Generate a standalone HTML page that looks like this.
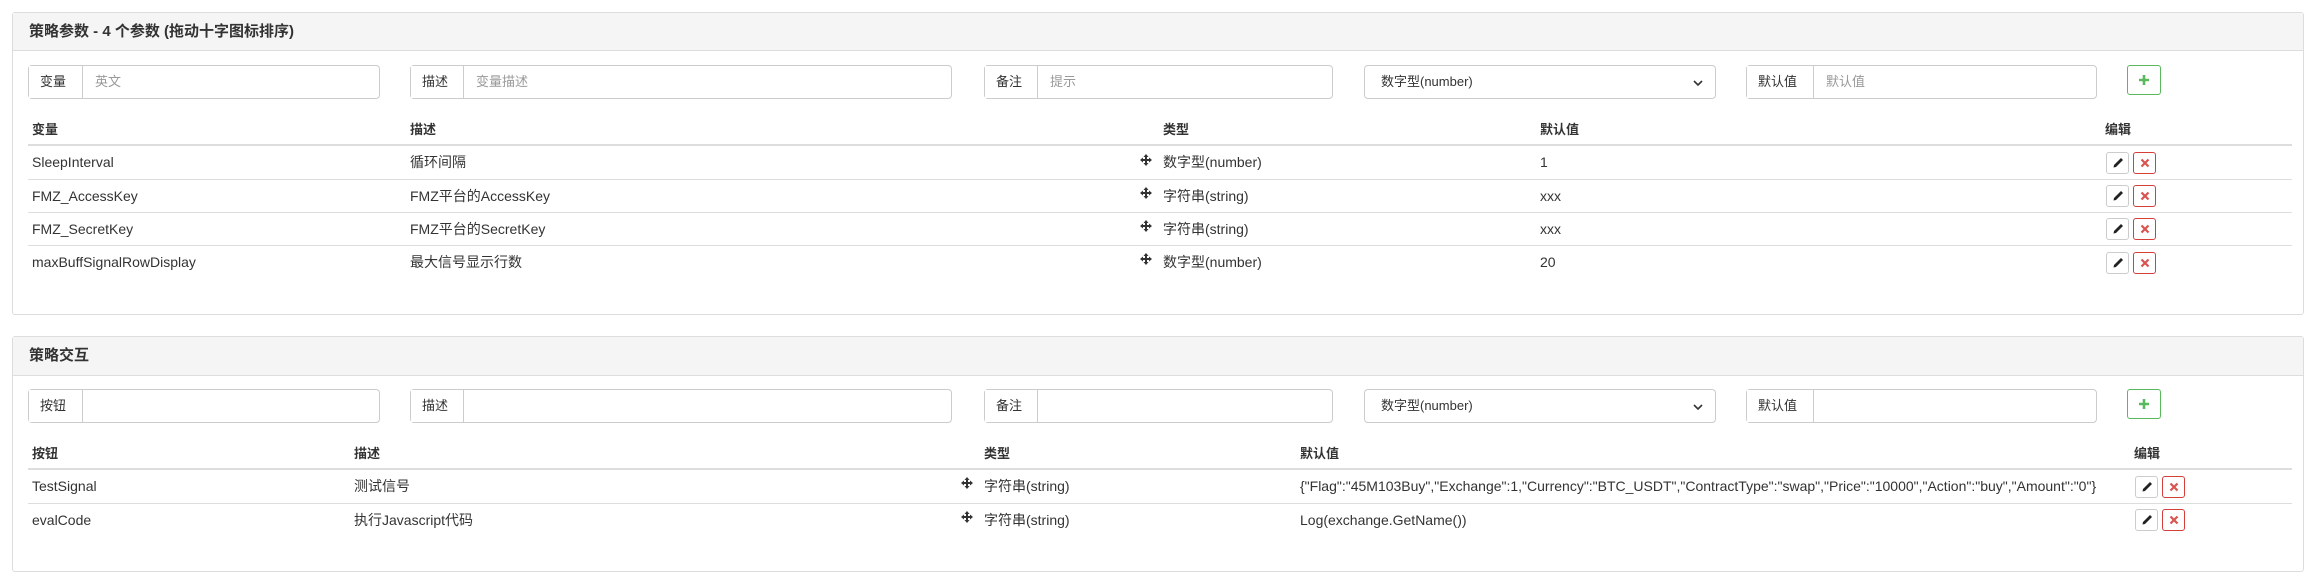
<!DOCTYPE html>
<html><head><meta charset="utf-8"><style>
*{box-sizing:border-box;margin:0;padding:0}
body{width:2313px;height:582px;background:#fff;font-family:"Liberation Sans","Noto Sans CJK SC",sans-serif;font-size:14px;color:#333;position:relative;overflow:hidden}
.a{position:absolute}
.panel{position:absolute;left:12px;width:2292px;border:1px solid #ddd;border-radius:3px;background:#fff}
.ph{position:absolute;left:0;top:0;right:0;background:#f5f5f5;border-bottom:1px solid #ddd;font-weight:bold;font-size:15px;padding-left:16px}
.grp{position:absolute;height:34px;border:1px solid #ccc;border-radius:4px;background:#fff}
.ad{position:absolute;left:0;top:0;bottom:0;border-right:1px solid #ccc;background:#fff;padding-left:11px;line-height:32px;font-size:13px}
.ph2{position:absolute;top:0;line-height:32px;color:#999;font-size:13px}
.sel{position:absolute;height:34px;border:1px solid #ccc;border-radius:4px;line-height:32px;padding-left:16px;font-size:13px}
.sel svg{position:absolute;right:12px;top:13px}
.plus{position:absolute;width:34px;height:30px;border:1px solid #5cb85c;border-radius:3px}
.th{position:absolute;font-weight:bold;font-size:13px;line-height:18px;height:18px}
.line{position:absolute;height:1px;background:#ddd}
.t{position:absolute;font-size:14px;white-space:nowrap;line-height:18px;height:18px}
.be{position:absolute;width:23px;height:22px;border:1px solid #ccc;border-radius:3px;background:#fff}
.bx{position:absolute;width:23px;height:22px;border:1px solid #d43f3a;border-radius:3px;background:#fff}
</style></head><body>
<svg width="0" height="0" style="position:absolute"><defs>
<symbol id="mv" viewBox="0 0 12 12"><path d="M6 0L8.5 3H7V5H9V3.5L12 6L9 8.5V7H7V9H8.5L6 12L3.5 9H5V7H3V8.5L0 6L3 3.5V5H5V3H3.5Z" fill="#333"/></symbol>
<symbol id="pen" viewBox="0 0 12 12"><path d="M9 1L11 3L4 10L1.5 10.5L2 8Z" fill="#222"/></symbol>
<symbol id="xx" viewBox="0 0 12 12"><path d="M2.5 2.5L9.5 9.5M9.5 2.5L2.5 9.5" stroke="#d9534f" stroke-width="2.2"/></symbol>
<symbol id="pl" viewBox="0 0 12 12"><path d="M6 1V11M1 6H11" stroke="#5cb85c" stroke-width="2.6"/></symbol>
</defs></svg>

<div class="panel" style="top:12px;height:303px">
<div class="ph" style="height:38px;line-height:37px">策略参数 - 4 个参数 (拖动十字图标排序)</div>
</div>
<div class="grp" style="left:28px;top:65px;width:352px"><div class="ad" style="width:54px">变量</div><div class="ph2" style="left:66px">英文</div></div>
<div class="grp" style="left:410px;top:65px;width:542px"><div class="ad" style="width:53px">描述</div><div class="ph2" style="left:65px">变量描述</div></div>
<div class="grp" style="left:984px;top:65px;width:349px"><div class="ad" style="width:53px">备注</div><div class="ph2" style="left:65px">提示</div></div>
<div class="sel" style="left:1364px;top:65px;width:352px">数字型(number)<svg width="10" height="8" viewBox="0 0 10 8"><path d="M1 2L5 6L9 2" stroke="#333" stroke-width="1.6" fill="none"/></svg></div>
<div class="grp" style="left:1746px;top:65px;width:351px"><div class="ad" style="width:67px">默认值</div><div class="ph2" style="left:79px">默认值</div></div>
<div class="plus" style="left:2127px;top:65px"><svg class="a" style="left:10px;top:8px" width="12" height="12"><use href="#pl"/></svg></div>

<div class="th" style="left:32px;top:121px">变量</div>
<div class="th" style="left:410px;top:121px">描述</div>
<div class="th" style="left:1163px;top:121px">类型</div>
<div class="th" style="left:1540px;top:121px">默认值</div>
<div class="th" style="left:2105px;top:121px">编辑</div>
<div class="line" style="left:28px;width:2264px;top:144px;height:2px"></div>
<div class="line" style="left:28px;width:2264px;top:179px"></div>
<div class="line" style="left:28px;width:2264px;top:212px"></div>
<div class="line" style="left:28px;width:2264px;top:245px"></div>

<div class="t" style="left:32px;top:153px">SleepInterval</div><div class="t" style="left:410px;top:153px">循环间隔</div><svg class="a" style="left:1140px;top:154px" width="12" height="12"><use href="#mv"/></svg><div class="t" style="left:1163px;top:153px">数字型(number)</div><div class="t" style="left:1540px;top:153px">1</div>
<div class="t" style="left:32px;top:187px">FMZ_AccessKey</div><div class="t" style="left:410px;top:187px">FMZ平台的AccessKey</div><svg class="a" style="left:1140px;top:187px" width="12" height="12"><use href="#mv"/></svg><div class="t" style="left:1163px;top:187px">字符串(string)</div><div class="t" style="left:1540px;top:187px">xxx</div>
<div class="t" style="left:32px;top:220px">FMZ_SecretKey</div><div class="t" style="left:410px;top:220px">FMZ平台的SecretKey</div><svg class="a" style="left:1140px;top:220px" width="12" height="12"><use href="#mv"/></svg><div class="t" style="left:1163px;top:220px">字符串(string)</div><div class="t" style="left:1540px;top:220px">xxx</div>
<div class="t" style="left:32px;top:253px">maxBuffSignalRowDisplay</div><div class="t" style="left:410px;top:253px">最大信号显示行数</div><svg class="a" style="left:1140px;top:253px" width="12" height="12"><use href="#mv"/></svg><div class="t" style="left:1163px;top:253px">数字型(number)</div><div class="t" style="left:1540px;top:253px">20</div>

<div class="be" style="left:2106px;top:152px"><svg class="a" style="left:5px;top:4px" width="12" height="12"><use href="#pen"/></svg></div><div class="bx" style="left:2133px;top:152px"><svg class="a" style="left:5px;top:4px" width="12" height="12"><use href="#xx"/></svg></div>
<div class="be" style="left:2106px;top:185px"><svg class="a" style="left:5px;top:4px" width="12" height="12"><use href="#pen"/></svg></div><div class="bx" style="left:2133px;top:185px"><svg class="a" style="left:5px;top:4px" width="12" height="12"><use href="#xx"/></svg></div>
<div class="be" style="left:2106px;top:218px"><svg class="a" style="left:5px;top:4px" width="12" height="12"><use href="#pen"/></svg></div><div class="bx" style="left:2133px;top:218px"><svg class="a" style="left:5px;top:4px" width="12" height="12"><use href="#xx"/></svg></div>
<div class="be" style="left:2106px;top:252px"><svg class="a" style="left:5px;top:4px" width="12" height="12"><use href="#pen"/></svg></div><div class="bx" style="left:2133px;top:252px"><svg class="a" style="left:5px;top:4px" width="12" height="12"><use href="#xx"/></svg></div>

<div class="panel" style="top:336px;height:236px">
<div class="ph" style="height:39px;line-height:38px">策略交互</div>
</div>
<div class="grp" style="left:28px;top:389px;width:352px"><div class="ad" style="width:54px">按钮</div></div>
<div class="grp" style="left:410px;top:389px;width:542px"><div class="ad" style="width:53px">描述</div></div>
<div class="grp" style="left:984px;top:389px;width:349px"><div class="ad" style="width:53px">备注</div></div>
<div class="sel" style="left:1364px;top:389px;width:352px">数字型(number)<svg width="10" height="8" viewBox="0 0 10 8"><path d="M1 2L5 6L9 2" stroke="#333" stroke-width="1.6" fill="none"/></svg></div>
<div class="grp" style="left:1746px;top:389px;width:351px"><div class="ad" style="width:67px">默认值</div></div>
<div class="plus" style="left:2127px;top:389px"><svg class="a" style="left:10px;top:8px" width="12" height="12"><use href="#pl"/></svg></div>

<div class="th" style="left:32px;top:445px">按钮</div>
<div class="th" style="left:354px;top:445px">描述</div>
<div class="th" style="left:984px;top:445px">类型</div>
<div class="th" style="left:1300px;top:445px">默认值</div>
<div class="th" style="left:2134px;top:445px">编辑</div>
<div class="line" style="left:28px;width:2264px;top:468px;height:2px"></div>
<div class="line" style="left:28px;width:2264px;top:503px"></div>

<div class="t" style="left:32px;top:477px">TestSignal</div><div class="t" style="left:354px;top:477px">测试信号</div><svg class="a" style="left:961px;top:477px" width="12" height="12"><use href="#mv"/></svg><div class="t" style="left:984px;top:477px">字符串(string)</div><div class="t" style="left:1300px;top:477px">{"Flag":"45M103Buy","Exchange":1,"Currency":"BTC_USDT","ContractType":"swap","Price":"10000","Action":"buy","Amount":"0"}</div>
<div class="t" style="left:32px;top:511px">evalCode</div><div class="t" style="left:354px;top:511px">执行Javascript代码</div><svg class="a" style="left:961px;top:511px" width="12" height="12"><use href="#mv"/></svg><div class="t" style="left:984px;top:511px">字符串(string)</div><div class="t" style="left:1300px;top:511px">Log(exchange.GetName())</div>

<div class="be" style="left:2135px;top:476px"><svg class="a" style="left:5px;top:4px" width="12" height="12"><use href="#pen"/></svg></div><div class="bx" style="left:2162px;top:476px"><svg class="a" style="left:5px;top:4px" width="12" height="12"><use href="#xx"/></svg></div>
<div class="be" style="left:2135px;top:509px"><svg class="a" style="left:5px;top:4px" width="12" height="12"><use href="#pen"/></svg></div><div class="bx" style="left:2162px;top:509px"><svg class="a" style="left:5px;top:4px" width="12" height="12"><use href="#xx"/></svg></div>
</body></html>
